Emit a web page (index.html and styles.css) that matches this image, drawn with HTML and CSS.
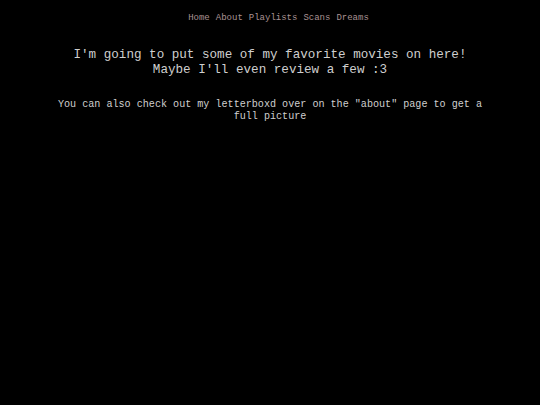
FILE: index.html
```html
<!DOCTYPE html>
<html>
<head>
<meta charset="utf-8">
<link rel="stylesheet" href="styles.css">
</head>
<body>
<nav class="nav">
  <a class="nav-link" href="#">Home</a>
  <a class="nav-link" href="#">About</a>
  <a class="nav-link" href="#">Playlists</a>
  <a class="nav-link" href="#">Scans</a>
  <a class="nav-link" href="#">Dreams</a>
</nav>
<main class="content">
  <h1 class="intro">I'm going to put some of my favorite movies on here!<br>Maybe I'll even review a few :3</h1>
  <p class="note">You can also check out my letterboxd over on the "about" page to get a full picture</p>
</main>
</body>
</html>
```
FILE: styles.css
```css
html, body {
  margin: 0;
  padding: 0;
  background: #000;
}
body {
  font-family: "Liberation Mono", "Courier New", monospace;
  color: #cfcfcf;
  padding: 13px 50px 0;
}
.nav {
  display: flex;
  justify-content: center;
  gap: 6px;
  padding-left: 17px;
  font-size: 9px;
  line-height: 11px;
}
.nav-link {
  color: #a89292;
  text-decoration: none;
}
.content {
  text-align: center;
}
.intro {
  font-size: 12.6px;
  font-weight: normal;
  line-height: 15px;
  margin: 24px 0 0;
}
.note {
  font-size: 10.1px;
  line-height: 12px;
  margin: 21px 0 0;
}
```
